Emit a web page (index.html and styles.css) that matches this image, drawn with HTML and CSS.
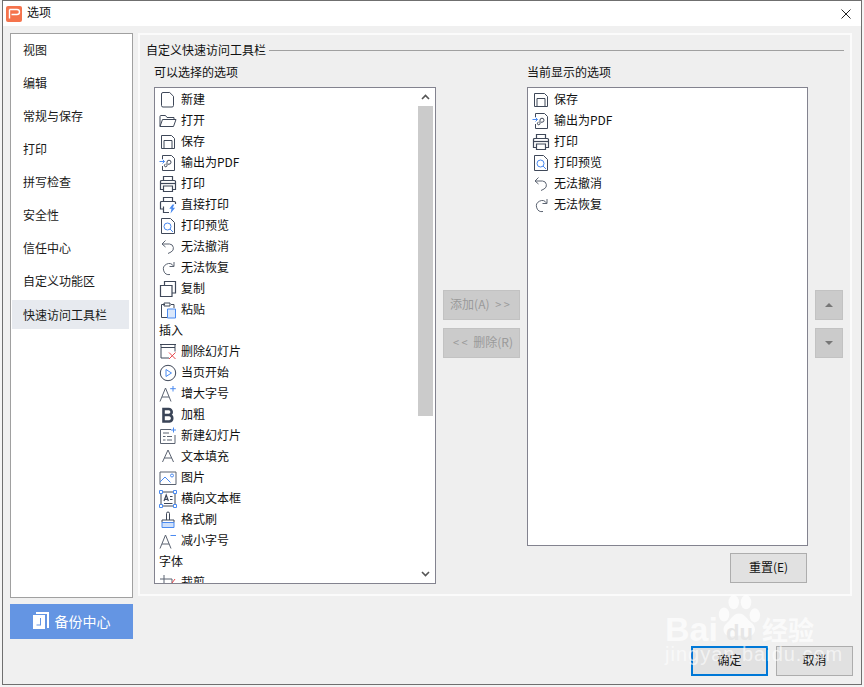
FILE: index.html
```html
<!DOCTYPE html>
<html lang="zh-CN">
<head>
<meta charset="utf-8">
<title>选项</title>
<link rel="stylesheet" href="styles.css">
</head>
<body>
<svg class="defs" width="0" height="0" aria-hidden="true">
  <defs>
    <symbol id="i-new" viewBox="0 0 18 18"><path class="s" d="M4 1.500h6.700l3.800 3.800V14.500a1.500 1.500 0 0 1-1.500 1.500H4a1.500 1.500 0 0 1-1.500-1.500V3A1.500 1.500 0 0 1 4 1.500z"/></symbol>
    <symbol id="i-open" viewBox="0 0 18 18"><path class="s" d="M1 14.500V4.500a1 1 0 0 1 1-1h4.500l1.500 2h7v2M1 14.500l2.500-7H17l-2.500 7z"/></symbol>
    <symbol id="i-save" viewBox="0 0 18 18"><path class="s" d="M2.500 2.500h10l3 3v10h-13zM5 15.500V7.500h8v8"/></symbol>
    <symbol id="i-pdf" viewBox="0 0 18 18"><path class="s" d="M3.500 5V1.500h9l3 3v12h-12V12"/><path class="s" d="M8 11.500V8.200a2 2 0 1 1 2 2H9M8 11.500a1.300 1.300 0 1 1-1.500-1.300"/><path class="b" d="M.5 7.500h5M3.500 5.500l2 2-2 2"/></symbol>
    <symbol id="i-print" viewBox="0 0 18 18"><path class="t" d="M4.500 5.500v-4h9v4M4.500 14.500h-3v-8a1 1 0 0 1 1-1h13a1 1 0 0 1 1 1v8h-3M4.500 11v5.500h9V11z"/><path class="t" d="M2 8.500h14"/></symbol>
    <symbol id="i-direct" viewBox="0 0 18 18"><path class="t" d="M4.500 5V1.500h9V5M4 13H1.500V6.500a1 1 0 0 1 1-1h13a1 1 0 0 1 1 1V8M4.500 10.500v6H10"/><path class="f" d="M13.500 8.500l-3.200 4.200h2.200l-1 4.700 4.600-5.600h-2.400l1.600-3.300z"/></symbol>
    <symbol id="i-preview" viewBox="0 0 18 18"><path class="s" d="M2.500 1.500h9l4 4v11h-13z"/><circle class="b" cx="8.500" cy="9.500" r="3.500"/><path class="b" d="M11 12l3 3"/></symbol>
    <symbol id="i-undo" viewBox="0 0 18 18"><path class="g" d="M6.500 2.500L3 6l3.500 3M3 6h7.500a4.200 4.200 0 0 1 1.500 8l-3 1.500"/></symbol>
    <symbol id="i-redo" viewBox="0 0 18 18"><path class="g" d="M15 3v4.500h-4.500M14.500 7A5.500 5.500 0 1 0 11 15.500"/></symbol>
    <symbol id="i-copy" viewBox="0 0 18 18"><path class="t" d="M5.500 5V1.500h11V13H13M1.500 5.500H13v11H1.500z"/></symbol>
    <symbol id="i-paste" viewBox="0 0 18 18"><path class="s" d="M6 3.500H2.500v13H8M12 3.500h3V7M5 2h6v3H5z"/><path class="lb" d="M8.500 8h8v9h-8z"/></symbol>
    <symbol id="i-del" viewBox="0 0 18 18"><path class="s" d="M1 1.500h16M2 1.500v3h14v-3M2 4.500v10.500h8M16 4.500v4"/><path class="r" d="M10 9.500l6.500 6.500M16.500 9.500L10 16"/></symbol>
    <symbol id="i-play" viewBox="0 0 18 18"><circle class="s" cx="9" cy="9" r="7.700"/><path class="b" d="M7 5.500L12.500 9 7 12.500z"/></symbol>
    <symbol id="i-aplus" viewBox="0 0 18 18"><path class="g" d="M1 16.500L6.500 3l5.500 13.500M3 12h7"/><path class="b" d="M14 1v5.500M11.200 3.700h5.600"/></symbol>
    <symbol id="i-bold" viewBox="0 0 18 18"><path class="bd" d="M4.500 3h5.200a3 3 0 0 1 0 6H4.500zM4.500 9h6a3.300 3.300 0 0 1 0 6.500h-6z"/></symbol>
    <symbol id="i-slide" viewBox="0 0 18 18"><path class="g" d="M12 2.500H1.500v14H16V8"/><path class="g" d="M4 6h6M4 9.500h2.500M8 9.500h5M4 13h2.500M8 13h5"/><path class="b" d="M14.500.500v5M12 3h5"/></symbol>
    <symbol id="i-afill" viewBox="0 0 18 18"><path class="g" d="M3.500 14L9 2l5.500 12M5.300 10h7.400"/></symbol>
    <symbol id="i-pic" viewBox="0 0 18 18"><path class="g" d="M1 3h16v12.500H1z"/><path class="b" d="M1 13l5-5 5.500 5.500"/><circle class="b" cx="13" cy="6.500" r="1.500"/></symbol>
    <symbol id="i-tbox" viewBox="0 0 18 18"><path class="s" d="M2 2h14v14H2z"/><path class="bf" d="M.5.500h3v3h-3zM14.500.500h3v3h-3zM.5 14.500h3v3h-3zM14.500 14.500h3v3h-3z"/><path class="t" d="M5 11l2.200-6 2.200 6M5.800 9.300h2.900M11 6.500h2.500M11 9.500h2.500M5 13.500h8.500"/></symbol>
    <symbol id="i-brush" viewBox="0 0 18 18"><path class="s" d="M7.500 9V2.500a1.500 1.500 0 0 1 3 0V9"/><path class="s" d="M3 9h12v2.500H3z"/><path class="lbb" d="M3 11.500h12v5H3z"/></symbol>
    <symbol id="i-aminus" viewBox="0 0 18 18"><path class="g" d="M1 16.500L6.500 3l5.500 13.500M3 12h7"/><path class="b" d="M11.500 3.500h5.500"/></symbol>
    <symbol id="i-crop" viewBox="0 0 18 18"><path class="g" d="M5 1v13h11M1 5h12v5"/><path class="r" d="M10 13l6-8"/></symbol>
  </defs>
</svg>

<div class="window">
  <header class="titlebar">
    <span class="appicon"><svg viewBox="0 0 16 16" width="16" height="16"><path class="logo" d="M3.500 3.500h7.500a2.500 2.500 0 0 1 0 5H5.500M3.500 12.500V3.500"/></svg></span>
    <span class="title">选项</span>
    <svg class="close" viewBox="0 0 10 10" width="10" height="10"><path d="M.5.5l9 9M9.500.5l-9 9"/></svg>
  </header>

  <main class="main">
    <aside class="leftcol">
      <nav class="nav">
        <a class="nav-item">视图</a>
        <a class="nav-item">编辑</a>
        <a class="nav-item">常规与保存</a>
        <a class="nav-item">打印</a>
        <a class="nav-item">拼写检查</a>
        <a class="nav-item">安全性</a>
        <a class="nav-item">信任中心</a>
        <a class="nav-item">自定义功能区</a>
        <a class="nav-item active">快速访问工具栏</a>
      </nav>
      <button class="backup">
        <svg viewBox="0 0 16 17" width="16" height="17"><path class="bk1" d="M3 0h13v16h-2V2H3z"/><path class="bk2" d="M0 3h12v14H0zM7 6v6.500H3.500v1H8V6z" fill-rule="evenodd"/></svg>
        <span>备份中心</span>
      </button>
    </aside>

    <section class="panel">
      <div class="group-head"><span>自定义快速访问工具栏</span><i class="rule"></i></div>
      <div class="cols">
        <div class="col col-left">
          <div class="col-label">可以选择的选项</div>
          <div class="list list-left">
            <ul class="rows">
              <li class="row"><svg class="ic"><use href="#i-new"/></svg>新建</li>
              <li class="row"><svg class="ic"><use href="#i-open"/></svg>打开</li>
              <li class="row"><svg class="ic"><use href="#i-save"/></svg>保存</li>
              <li class="row"><svg class="ic"><use href="#i-pdf"/></svg>输出为PDF</li>
              <li class="row"><svg class="ic"><use href="#i-print"/></svg>打印</li>
              <li class="row"><svg class="ic"><use href="#i-direct"/></svg>直接打印</li>
              <li class="row"><svg class="ic"><use href="#i-preview"/></svg>打印预览</li>
              <li class="row"><svg class="ic"><use href="#i-undo"/></svg>无法撤消</li>
              <li class="row"><svg class="ic"><use href="#i-redo"/></svg>无法恢复</li>
              <li class="row"><svg class="ic"><use href="#i-copy"/></svg>复制</li>
              <li class="row"><svg class="ic"><use href="#i-paste"/></svg>粘贴</li>
              <li class="row section">插入</li>
              <li class="row"><svg class="ic"><use href="#i-del"/></svg>删除幻灯片</li>
              <li class="row"><svg class="ic"><use href="#i-play"/></svg>当页开始</li>
              <li class="row"><svg class="ic"><use href="#i-aplus"/></svg>增大字号</li>
              <li class="row"><svg class="ic"><use href="#i-bold"/></svg>加粗</li>
              <li class="row"><svg class="ic"><use href="#i-slide"/></svg>新建幻灯片</li>
              <li class="row"><svg class="ic"><use href="#i-afill"/></svg>文本填充</li>
              <li class="row"><svg class="ic"><use href="#i-pic"/></svg>图片</li>
              <li class="row"><svg class="ic"><use href="#i-tbox"/></svg>横向文本框</li>
              <li class="row"><svg class="ic"><use href="#i-brush"/></svg>格式刷</li>
              <li class="row"><svg class="ic"><use href="#i-aminus"/></svg>减小字号</li>
              <li class="row section">字体</li>
              <li class="row"><svg class="ic"><use href="#i-crop"/></svg>裁剪</li>
            </ul>
            <div class="scrollbar">
              <div class="sb-btn"><svg viewBox="0 0 9 6" width="9" height="6"><path d="M1 5l3.500-3.500L8 5"/></svg></div>
              <div class="sb-thumb"></div>
              <div class="sb-track"></div>
              <div class="sb-btn"><svg viewBox="0 0 9 6" width="9" height="6"><path d="M1 1l3.500 3.500L8 1"/></svg></div>
            </div>
          </div>
        </div>

        <div class="mid">
          <button class="btn disabled">添加(A) <span class="arrows">&gt; &gt;</span></button>
          <button class="btn disabled"><span class="arrows">&lt; &lt;</span> 删除(R)</button>
        </div>

        <div class="col col-right">
          <div class="col-label">当前显示的选项</div>
          <div class="list list-right">
            <ul class="rows">
              <li class="row"><svg class="ic"><use href="#i-save"/></svg>保存</li>
              <li class="row"><svg class="ic"><use href="#i-pdf"/></svg>输出为PDF</li>
              <li class="row"><svg class="ic"><use href="#i-print"/></svg>打印</li>
              <li class="row"><svg class="ic"><use href="#i-preview"/></svg>打印预览</li>
              <li class="row"><svg class="ic"><use href="#i-undo"/></svg>无法撤消</li>
              <li class="row"><svg class="ic"><use href="#i-redo"/></svg>无法恢复</li>
            </ul>
          </div>
          <button class="btn reset">重置(E)</button>
        </div>

        <div class="order">
          <button class="btn disabled small"><i class="tri up"></i></button>
          <button class="btn disabled small"><i class="tri down"></i></button>
        </div>
      </div>
    </section>
  </main>

  <footer class="footer">
    <button class="btn primary">确定</button>
    <button class="btn">取消</button>
  </footer>

  <div class="watermark">
    <svg class="paw" viewBox="0 0 50 54" width="44" height="48"><ellipse cx="8" cy="23" rx="6" ry="8"/><ellipse cx="19" cy="9" rx="6" ry="8"/><ellipse cx="33" cy="9" rx="6" ry="8"/><ellipse cx="43" cy="24" rx="6" ry="8"/><path d="M25 22c-7 0-9 7-14 11-7 6-3 15 5 15 4 0 6-1 9-1s6 2 11 1c7-1 10-9 4-15-6-4-8-11-15-11z"/></svg>
    <span class="wm-bai">Bai</span>
    <span class="wm-du">du</span>
    <span class="wm-jy">经验</span>
    <span class="wm-url">jingyan.baidu.com</span>
  </div>
</div>
</body>
</html>
```

FILE: styles.css
```css
* { box-sizing: border-box; }
html, body { margin: 0; padding: 0; }
body {
  width: 864px;
  height: 687px;
  background: #f4f4f4;
  overflow: hidden;
  font: 12px/16px "Noto Sans CJK SC", "Liberation Sans", sans-serif;
  color: #111;
}
.defs { position: absolute; }
.s, .t, .g, .b, .r, .lb, .lbb { fill: none; stroke-width: 1; }
.s, .t { stroke: #3f4859; }
.t { stroke-width: 1.2; }
.g { stroke: #5b6371; }
.b { stroke: #4a8af0; }
.r { stroke: #e8484d; }
.f { fill: #4a8af0; }
.lb { fill: #dbe8fb; stroke: #4a8af0; }
.lbb { fill: #cfe0fa; stroke: #4a8af0; }
.bf { fill: #fff; stroke: #4a8af0; }
.bd { fill: none; stroke: #3a4457; stroke-width: 2.6; }

.window {
  position: relative;
  width: 860px;
  height: 685px;
  margin-left: 2px;
  border: 1px solid #6f6f6f;
  background: #f0f0f0;
}

.titlebar {
  display: flex;
  align-items: center;
  height: 25px;
  padding: 0 10px 0 3px;
  background: #fff;
}
.appicon {
  display: block;
  width: 16px;
  height: 16px;
  border-radius: 2px;
  background: #f5734c;
}
.appicon svg { display: block; }
.logo { fill: none; stroke: #fff; stroke-width: 1.4; }
.title { margin: 0 0 3px 5px; }
.close { margin-left: auto; }
.close path { fill: none; stroke: #222; stroke-width: 1; }

.main {
  display: flex;
  gap: 5px;
  padding: 7px 0 0 7px;
}
.leftcol {
  display: flex;
  flex-direction: column;
  gap: 6px;
  width: 123px;
}
.nav {
  display: flex;
  flex-direction: column;
  height: 565px;
  border: 1px solid #a0a0a0;
  background: #fff;
}
.nav-item {
  display: flex;
  align-items: center;
  height: 33px;
  padding: 0 0 2px 12px;
  color: #1a1a1a;
}
.nav-item.active {
  height: 29px;
  margin: 2px 3px 0 1px;
  padding: 0 0 0 11px;
  background: #e7eaef;
}
.backup {
  display: flex;
  align-items: center;
  justify-content: center;
  gap: 6px;
  height: 35px;
  border: 0;
  padding: 0 0 2px;
  background: #6495e3;
  color: #fff;
  font: 14px/16px "Noto Sans CJK SC", sans-serif;
}
.bk1, .bk2 { fill: #fff; }

.panel {
  width: 714px;
  height: 563px;
  padding: 7px 6px 0;
  border: 2px solid #fbfbfb;
  background: #efefef;
}
.group-head {
  display: flex;
  align-items: center;
  gap: 3px;
  height: 16px;
}
.rule {
  flex: 1;
  height: 1px;
  background: #a0a0a0;
}
.cols {
  display: flex;
  gap: 7px;
  margin-top: 6px;
  padding-left: 8px;
}
.col-label { height: 16px; }
.list {
  display: flex;
  margin-top: 7px;
  border: 1px solid #83838f;
  background: #fff;
}
.col-left { width: 282px; }
.list-left { height: 497px; }
.col-right { width: 281px; display: flex; flex-direction: column; align-items: flex-end; }
.col-right .col-label { align-self: flex-start; }
.list-right { width: 100%; height: 459px; }
.rows {
  flex: 1;
  margin: 0;
  padding: 0;
  list-style: none;
  overflow: hidden;
}
.row {
  display: flex;
  align-items: center;
  gap: 4px;
  height: 21px;
  padding-left: 4px;
  white-space: nowrap;
}
.ic { width: 18px; height: 18px; flex: none; margin-top: 2px; }

.scrollbar {
  display: flex;
  flex-direction: column;
  width: 15px;
  margin-right: 2px;
}
.sb-btn {
  display: flex;
  align-items: center;
  justify-content: center;
  height: 18px;
  flex: none;
}
.sb-btn svg path { fill: none; stroke: #555; stroke-width: 1.6; }
.sb-thumb { height: 310px; background: #cbcbcb; }
.sb-track { flex: 1; }

.btn {
  display: flex;
  align-items: center;
  justify-content: center;
  width: 77px;
  height: 30px;
  padding: 0 0 2px;
  border: 1px solid #adadad;
  background: #e1e1e1;
  color: #111;
  font: 12px/16px "Noto Sans CJK SC", sans-serif;
  white-space: pre;
}
.btn.disabled {
  background: #cbcbcb;
  border-color: #c2c2c2;
  color: #9a9a9a;
}
.arrows { font-size: 11px; margin: 0 3px; }
.mid {
  display: flex;
  flex-direction: column;
  gap: 8px;
  padding-top: 226px;
}
.reset { margin: 7px 1px 0 0; }
.order {
  display: flex;
  flex-direction: column;
  gap: 8px;
  padding-top: 226px;
}
.btn.small { width: 28px; padding: 0; }
.tri {
  display: block;
  width: 0;
  height: 0;
  border-left: 4.5px solid transparent;
  border-right: 4.5px solid transparent;
}
.tri.up { border-bottom: 4px solid #777; }
.tri.down { border-top: 4px solid #777; }

.footer {
  display: flex;
  justify-content: flex-end;
  gap: 8px;
  margin-top: 7px;
  padding-right: 8px;
}
.btn.primary { border: 2px solid #0078d7; }

.watermark {
  position: absolute;
  left: 660px;
  top: 590px;
  width: 180px;
  height: 85px;
  color: rgba(255, 255, 255, 0.7);
  pointer-events: none;
}
.watermark span { position: absolute; white-space: nowrap; }
.paw { position: absolute; left: 54px; top: 3px; fill: rgba(255, 255, 255, 0.7); }
.wm-bai { left: 2px; top: 18px; font: 700 34px/40px "Liberation Sans", sans-serif; }
.wm-du { left: 63px; top: 30px; font: 700 22px/24px "Liberation Sans", sans-serif; color: #e6e6e6; }
.wm-jy { left: 99px; top: 22px; font: 700 26px/32px "Noto Sans CJK SC", sans-serif; }
.wm-url { left: 2px; top: 51px; font: 400 20px/24px "Liberation Sans", sans-serif; letter-spacing: 1px; color: rgba(255, 255, 255, 0.6); }
```
